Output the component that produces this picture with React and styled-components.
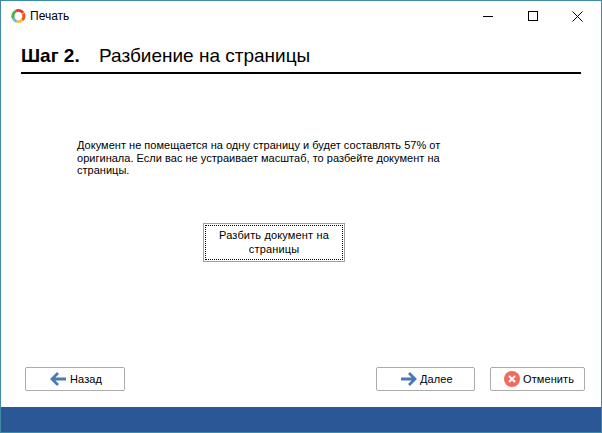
import React from 'react';
import styled, { createGlobalStyle } from 'styled-components';

const Global = createGlobalStyle`
  html, body { margin: 0; padding: 0; background: #fff; }
  body { font-family: "Liberation Sans", Arial, sans-serif; color: #000; }
`;
const Win = styled.div`
  box-sizing: border-box; width: 602px; height: 433px; border: 1px solid #3f8ba6;
  background: #fff; display: flex; flex-direction: column; overflow: hidden;
`;
const TitleBar = styled.div`
  height: 30px; flex: none; display: flex; align-items: center; padding-left: 9px;
`;
const AppIcon = styled.svg`width: 16px; height: 16px; flex: none;`;
const TitleText = styled.span`font-size: 12px; margin-left: 4px; flex: 1;`;
const Ctl = styled.div`
  width: 45px; height: 30px; display: flex; align-items: center; justify-content: center;
  margin-right: ${p => p.$mr || 0}px;
`;
const Main = styled.div`flex: 1; display: flex; flex-direction: column; padding: 0 20px;`;
const Heading = styled.div`
  height: 41px; border-bottom: 2px solid #000; display: flex; align-items: center;
  font-size: 19px; line-height: 22px; margin-bottom: 1px;
  & > * { position: relative; top: 4px; }
`;
const Step = styled.b`width: 78px; flex: none;`;
const HeadText = styled.span``;
const Para = styled.p`
  margin: 64px 0 0 56px; width: 392px; font-size: 11px; line-height: 12.5px; letter-spacing: 0.02px;
`;
const SplitWrap = styled.div`margin: 46px 0 0 182px;`;
const SplitBtn = styled.button`
  box-sizing: border-box; width: 142px; height: 39px; background: #fff; border: 1px solid #a0a0a0; padding: 1px;
  font: 11px/14px "Liberation Sans", Arial, sans-serif; letter-spacing: 0.15px; color: #000; display: block;
`;
const Dotted = styled.span`
  box-sizing: border-box; display: flex; width: 100%; height: 100%; border: 1px dotted #000; align-items: center; justify-content: center; text-align: center; padding: 0 6px;
`;
const Footer = styled.div`
  display: flex; align-items: center; padding: 0 0 0 24px; height: 23px; margin-bottom: 17px; flex: none;
`;
const Btn = styled.button`
  box-sizing: border-box; width: ${p => p.$w}px; height: 24px; margin-left: ${p => p.$ml || 0}px;
  background: #fff; border: 1px solid #ababab; border-radius: 2px; padding: 0 0 0 ${p => p.$pl || 0}px;
  font: 11px "Liberation Sans", Arial, sans-serif; color: #000; letter-spacing: 0.1px;
  display: flex; align-items: center; justify-content: flex-start; gap: 3px;
`;
const Band = styled.div`height: 25px; background: #2b5797; flex: none;`;

const Arrow = ({ flip }) => (
  <svg width="17" height="14" viewBox="0 0 17 14" style={flip ? { transform: 'scaleX(-1)' } : undefined}>
    <path d="M8 1 2 7l6 6M2.5 7H16" fill="none" stroke="#4a79b5" strokeWidth="2.8" />
  </svg>
);

export default function App() {
  return (
    <>
      <Global />
      <Win>
        <TitleBar>
          <AppIcon viewBox="0 0 16 16">
            <g fill="none" strokeWidth="3">
              <path d="M3.5 10.5A5.5 5.5 0 0 1 6 3" stroke="#4caf50" />
              <path d="M6 3a5.5 5.5 0 0 1 7 2" stroke="#e53935" />
              <path d="M13.2 5.5a5.5 5.5 0 0 1-1 6.5" stroke="#f4511e" />
              <path d="M12 12a5.5 5.5 0 0 1-5.5 1.4" stroke="#fbc02d" />
              <path d="M6.5 13.4A5.5 5.5 0 0 1 3.5 10.5" stroke="#64b5f6" />
            </g>
          </AppIcon>
          <TitleText>Печать</TitleText>
          <Ctl>
            <svg width="10" height="10"><path d="M0 5.5h10" stroke="#000" /></svg>
          </Ctl>
          <Ctl>
            <svg width="10" height="10"><rect x=".5" y=".5" width="9" height="9" fill="none" stroke="#000" /></svg>
          </Ctl>
          <Ctl $mr={1}>
            <svg width="11" height="11"><path d="M.5.5l10 10M10.5.5l-10 10" stroke="#000" /></svg>
          </Ctl>
        </TitleBar>
        <Main>
          <Heading><Step>Шаг 2.</Step><HeadText>Разбиение на страницы</HeadText></Heading>
          <Para>Документ не помещается на одну страницу и будет составлять 57% от оригинала. Если вас не устраивает масштаб, то разбейте документ на страницы.</Para>
          <SplitWrap>
            <SplitBtn><Dotted>Разбить документ на страницы</Dotted></SplitBtn>
          </SplitWrap>
        </Main>
        <Footer>
          <Btn $w={100} $pl={24}><Arrow />Назад</Btn>
          <Btn $w={99} $ml={251} $pl={23}><Arrow flip />Далее</Btn>
          <Btn $w={95} $ml={15} $pl={13}>
            <svg width="16" height="16" viewBox="0 0 16 16"><circle cx="8" cy="8" r="8" fill="#f26a5c" /><path d="M5 5l6 6M11 5l-6 6" stroke="#fff" strokeWidth="2" /></svg>
            Отменить
          </Btn>
        </Footer>
        <Band />
      </Win>
    </>
  );
}
